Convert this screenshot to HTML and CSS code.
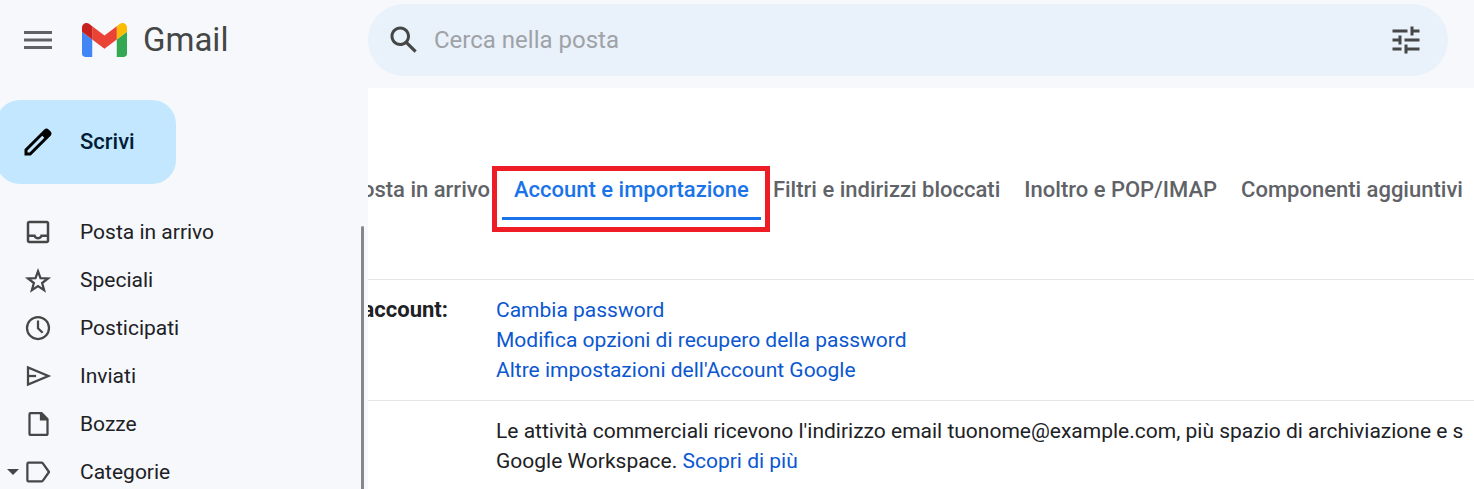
FILE: index.html
```html
<!DOCTYPE html>
<html lang="it">
<head>
    <meta charset="UTF-8">
    <meta name="viewport" content="width=device-width, initial-scale=1.0">
    <title>Gmail</title>
    <link rel="stylesheet" href="styles.css">
</head>
<body>
    <header class="topbar">
        <div class="brand">
            <button type="button" class="icon-button" aria-label="Menu">
                <svg width="28" height="20" viewBox="0 0 28 20" fill="#5f6368"><path d="M0 1h28v3H0zM0 8.500h28v3H0zM0 16h28v3H0z"/></svg>
            </button>
            <a href="#" class="logo">
                <svg width="45" height="34" viewBox="52 42 88 66">
                    <path fill="#4285f4" d="M58 108h14V74L52 59v43c0 3.320 2.690 6 6 6"/>
                    <path fill="#34a853" d="M120 108h14c3.320 0 6-2.690 6-6V59l-20 15"/>
                    <path fill="#fbbc04" d="M120 48v26l20-15v-8c0-7.420-8.470-11.650-14.400-7.200"/>
                    <path fill="#ea4335" d="M72 74V48l24 18 24-18v26L96 92"/>
                    <path fill="#c5221f" d="M52 51v8l20 15V48l-5.600-4.200c-5.940-4.450-14.400-.220-14.400 7.200"/>
                </svg>
                <span>Gmail</span>
            </a>
        </div>
        <form class="search">
            <button type="button" class="icon-button" aria-label="Cerca">
                <svg width="36" height="36" viewBox="0 0 24 24" fill="#444746"><path d="M20.490 19l-5.730-5.730C15.530 12.200 16 10.910 16 9.500 16 5.910 13.090 3 9.500 3S3 5.910 3 9.500 5.910 16 9.500 16c1.410 0 2.700-.470 3.770-1.240L19 20.490 20.490 19zM5 9.500C5 7.010 7.010 5 9.500 5S14 7.010 14 9.500 11.990 14 9.500 14 5 11.990 5 9.500z"/></svg>
            </button>
            <input type="text" class="search-input" placeholder="Cerca nella posta" aria-label="Cerca nella posta">
            <button type="button" class="icon-button" aria-label="Opzioni di ricerca">
                <svg width="36" height="36" viewBox="0 0 24 24" fill="#444746"><path d="M3 17v2h6v-2H3zM3 5v2h10V5H3zm10 16v-2h8v-2h-8v-2h-2v6h2zM7 9v2H3v2h4v2h2V9H7zm14 4v-2H11v2h10zm-6-4h2V7h4V5h-4V3h-2v6z"/></svg>
            </button>
        </form>
    </header>

    <div class="layout">
        <aside class="sidebar">
            <button type="button" class="compose">
                <svg width="36" height="36" viewBox="0 0 24 24"><path d="M20.410 4.940l-1.350-1.350c-.78-.78-2.050-.78-2.830 0L3 16.820V21h4.180L20.410 7.770c.79-.78.79-2.050 0-2.830zM6.410 19.060L5 19v-1.360l9.820-9.820 1.410 1.410-9.820 9.830z"/></svg>
                Scrivi
            </button>
            <div class="folders">
                <nav class="folder-list">
                    <a href="#" class="folder">
                        <svg width="30" height="30" viewBox="0 0 24 24" fill="#444746"><path d="M19 3H5c-1.100 0-2 .9-2 2v14c0 1.100.9 2 2 2h14c1.100 0 2-.9 2-2V5c0-1.100-.9-2-2-2zm0 16H5v-3h3.560c.69 1.190 1.970 2 3.450 2s2.750-.81 3.450-2H19v3zm0-5h-4.990c0 1.100-.9 2-2 2s-2-.9-2-2H5V5h14v9z"/></svg>
                        Posta in arrivo
                    </a>
                    <a href="#" class="folder">
                        <svg width="30" height="30" viewBox="0 0 24 24" fill="none" stroke="#444746" stroke-width="1.800"><path d="M12 5l2 5.500 6 .3-4.700 3.600 1.600 5.700-4.900-3.300-4.900 3.300 1.600-5.700L4 10.800l6-.3z"/></svg>
                        Speciali
                    </a>
                    <a href="#" class="folder">
                        <svg width="30" height="30" viewBox="0 0 24 24" fill="none" stroke="#444746" stroke-width="1.800"><circle cx="12" cy="12" r="8.800"/><path d="M12 6v6.200l3.700 3.600"/></svg>
                        Posticipati
                    </a>
                    <a href="#" class="folder">
                        <svg width="30" height="30" viewBox="0 0 24 24" fill="none" stroke="#444746" stroke-width="1.800"><path d="M4 5.200v13.600L20.300 12z"/><path d="M4 12h6.500"/></svg>
                        Inviati
                    </a>
                    <a href="#" class="folder">
                        <svg width="30" height="30" viewBox="0 0 24 24" fill="none" stroke="#444746" stroke-width="1.800"><path d="M6 3.300h8.800l4.800 4.800V19.900a.8.8 0 0 1-.8.8H6a.8.8 0 0 1-.8-.8V4.100a.8.8 0 0 1 .8-.8z"/><path fill="#444746" stroke="none" d="M13.500 3v6.200H20V7.500L15.500 3z"/></svg>
                        Bozze
                    </a>
                    <a href="#" class="folder">
                        <svg class="caret" width="12" height="6" viewBox="0 0 12 6" fill="#444746"><path d="M0 0h12L6 6z"/></svg>
                        <svg width="30" height="30" viewBox="0 0 24 24" fill="none" stroke="#444746" stroke-width="1.800" stroke-linejoin="round"><path d="M4.500 4.500h10.200c.5 0 .9.200 1.200.6l4.900 6.900-4.900 6.900c-.3.400-.7.600-1.200.6H4.500c-.6 0-1-.4-1-1v-13c0-.6.4-1 1-1z"/></svg>
                        Categorie
                    </a>
                </nav>
                <div class="scroll-thumb"></div>
            </div>
        </aside>

        <main class="settings">
            <nav class="tabs">
                <a href="#" class="tab tab-cut">osta in arrivo</a>
                <a href="#" class="tab tab-active">Account e importazione</a>
                <a href="#" class="tab">Filtri e indirizzi bloccati</a>
                <a href="#" class="tab">Inoltro e POP/IMAP</a>
                <a href="#" class="tab">Componenti aggiuntivi</a>
            </nav>
            <section class="setting">
                <h2 class="setting-label">account:</h2>
                <div class="setting-body">
                    <a href="#">Cambia password</a><br>
                    <a href="#">Modifica opzioni di recupero della password</a><br>
                    <a href="#">Altre impostazioni dell'Account Google</a>
                </div>
            </section>
            <section class="setting">
                <div class="setting-label"></div>
                <div class="setting-body">
                    Le attività commerciali ricevono l'indirizzo email tuonome@example.com, più spazio di archiviazione e s<br>
                    Google Workspace. <a href="#">Scopri di più</a>
                </div>
            </section>
        </main>
    </div>
</body>
</html>
```

FILE: styles.css
```css
* {
    box-sizing: border-box;
}
body {
    margin: 0;
    height: 100vh;
    display: flex;
    flex-direction: column;
    overflow: hidden;
    background: #f6f8fc;
    color: #202124;
    font-family: Roboto, "Noto Sans", sans-serif;
    font-size: 21px;
    line-height: 30px;
}
a {
    color: #0b57d0;
    text-decoration: none;
}
button {
    border: none;
    background: none;
    font: inherit;
    cursor: pointer;
}
svg {
    display: block;
    flex: none;
}

/* top bar */
.topbar {
    display: flex;
    padding: 4px 26px 12px 0;
}
.brand {
    flex: 0 0 368px;
    display: flex;
    align-items: center;
    gap: 30px;
    padding-left: 24px;
}
.icon-button {
    padding: 0;
}
.logo {
    display: flex;
    align-items: center;
    gap: 16px;
    color: #444746;
    font-size: 33px;
}
.search {
    flex: 1;
    display: flex;
    align-items: center;
    gap: 12px;
    height: 72px;
    padding: 0 24px 0 18px;
    border-radius: 36px;
    background: #e9f1fb;
}
.search-input {
    flex: 1;
    min-width: 0;
    padding: 0;
    border: none;
    outline: none;
    background: none;
    font: inherit;
    font-size: 24px;
}
.search-input::placeholder {
    color: #9fa2a6;
    opacity: 1;
}

/* sidebar */
.layout {
    flex: 1;
    min-height: 0;
    display: flex;
}
.sidebar {
    flex: 0 0 368px;
    display: flex;
    flex-direction: column;
    gap: 24px;
    padding-top: 12px;
    overflow: hidden;
}
.compose {
    display: flex;
    align-items: center;
    align-self: flex-start;
    gap: 24px;
    height: 84px;
    margin-left: -4px;
    padding: 0 41px 0 24px;
    border-radius: 24px;
    background: #c2e7ff;
    color: #001d35;
    font-size: 22px;
    font-weight: 500;
}
.folders {
    flex: 1;
    min-height: 0;
    display: flex;
    padding-right: 4px;
}
.folder-list {
    flex: 1;
}
.folder {
    display: flex;
    align-items: center;
    gap: 27px;
    height: 48px;
    padding-left: 23px;
    position: relative;
    color: #202124;
}
.caret {
    position: absolute;
    left: 7px;
}
.scroll-thumb {
    width: 3px;
    margin-top: 18px;
    border-radius: 2px 2px 0 0;
    background: #868886;
}

/* settings */
.settings {
    flex: 1;
    min-width: 0;
    padding-top: 72px;
    overflow: hidden;
    background: #fff;
    white-space: nowrap;
}
.tabs {
    display: flex;
    height: 119px;
    font-size: 22px;
}
.tab {
    flex: none;
    position: relative;
    height: 60px;
    padding: 15px 12px;
    color: #5f6368;
    font-weight: 500;
}
.tab-cut {
    width: 134px;
    display: flex;
    justify-content: flex-end;
    overflow: hidden;
}
.tab-active {
    color: #1a73e8;
    border-bottom: 3px solid #1a73e8;
}
/* red highlight frame round the active tab */
.tab-active::after {
    content: "";
    position: absolute;
    inset: 6px -9px -15px -10px;
    border: 5px solid #ee1c25;
}
.setting {
    display: flex;
    gap: 48px;
    padding: 15px 0;
    border-top: 1px solid #e3e5e8;
}
.setting-label {
    flex: 0 0 80px;
    display: flex;
    justify-content: flex-end;
    margin: 0;
    overflow: hidden;
    font-size: 22px;
    font-weight: 700;
}
```
